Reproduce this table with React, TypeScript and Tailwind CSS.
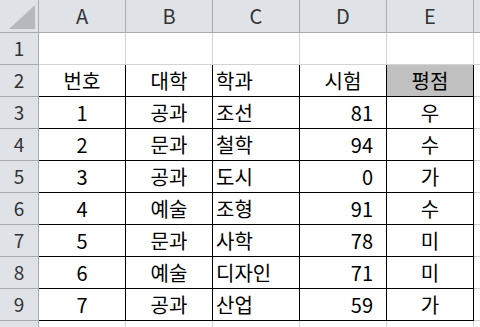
import React from 'react';

const cols = ['A', 'B', 'C', 'D', 'E'];

const data = [
  ['번호', '대학', '학과', '시험', '평점'],
  ['1', '공과', '조선', '81', '우'],
  ['2', '문과', '철학', '94', '수'],
  ['3', '공과', '도시', '0', '가'],
  ['4', '예술', '조형', '91', '수'],
  ['5', '문과', '사학', '78', '미'],
  ['6', '예술', '디자인', '71', '미'],
  ['7', '공과', '산업', '59', '가'],
];

const font = { fontFamily: '"Noto Sans CJK KR", "Noto Sans", sans-serif' };

const HeadCell = ({ children, className = '' }: { children?: React.ReactNode; className?: string }) => (
  <div
    className={`flex items-center justify-center bg-[#dfe3e8] text-[#333] border-r border-b border-[#ababab] text-[19px] ${className}`}
  >
    {children}
  </div>
);

const App = () => {
  return (
    <div className="w-[480px] h-[327px] overflow-hidden bg-white text-black" style={font}>
      <div className="grid grid-cols-[39px_87px_87px_87px_87px_87px_60px] grid-rows-[33px_32px_32px_32px_32px_32px_32px_32px_32px_32px_20px]">
        {/* corner */}
        <div className="relative bg-[#dfe3e8] border-r border-b border-[#ababab]">
          <svg className="absolute right-[3px] bottom-[3px]" width="26" height="24" viewBox="0 0 26 24">
            <polygon points="26,0 26,24 0,24" fill="#b5b9bd" />
          </svg>
        </div>
        {cols.map((c) => (
          <HeadCell key={c} className="text-[20px]">{c}</HeadCell>
        ))}
        <HeadCell className="border-r-0" />

        {/* row 1 */}
        <HeadCell>1</HeadCell>
        {cols.map((c) => (
          <div key={c} className="border-r border-b border-[#d4d4d4]" />
        ))}
        <div className="border-b border-[#d4d4d4]" />

        {data.map((row, ri) => (
          <React.Fragment key={ri}>
            <HeadCell>{ri + 2}</HeadCell>
            {row.map((v, ci) => {
              let align = 'justify-center';
              if (ci === 2) align = 'justify-start pl-[3px]';
              if (ci === 3 && ri > 0) align = 'justify-end pr-[13px]';
              const fill = ri === 0 && ci === 4 ? 'bg-[#c0c0c0]' : 'bg-white';
              return (
                <div
                  key={ci}
                  className={`flex items-center ${align} ${fill} border-r border-b border-black text-[20px] leading-none`}
                >
                  {v}
                </div>
              );
            })}
            <div className="border-b border-[#d4d4d4]" />
          </React.Fragment>
        ))}

        {/* row 10 (cut off) */}
        <HeadCell className="border-b-0" />
        {cols.map((c) => (
          <div key={c} className="border-r border-[#d4d4d4]" />
        ))}
        <div />
      </div>
    </div>
  );
};

export default App;
